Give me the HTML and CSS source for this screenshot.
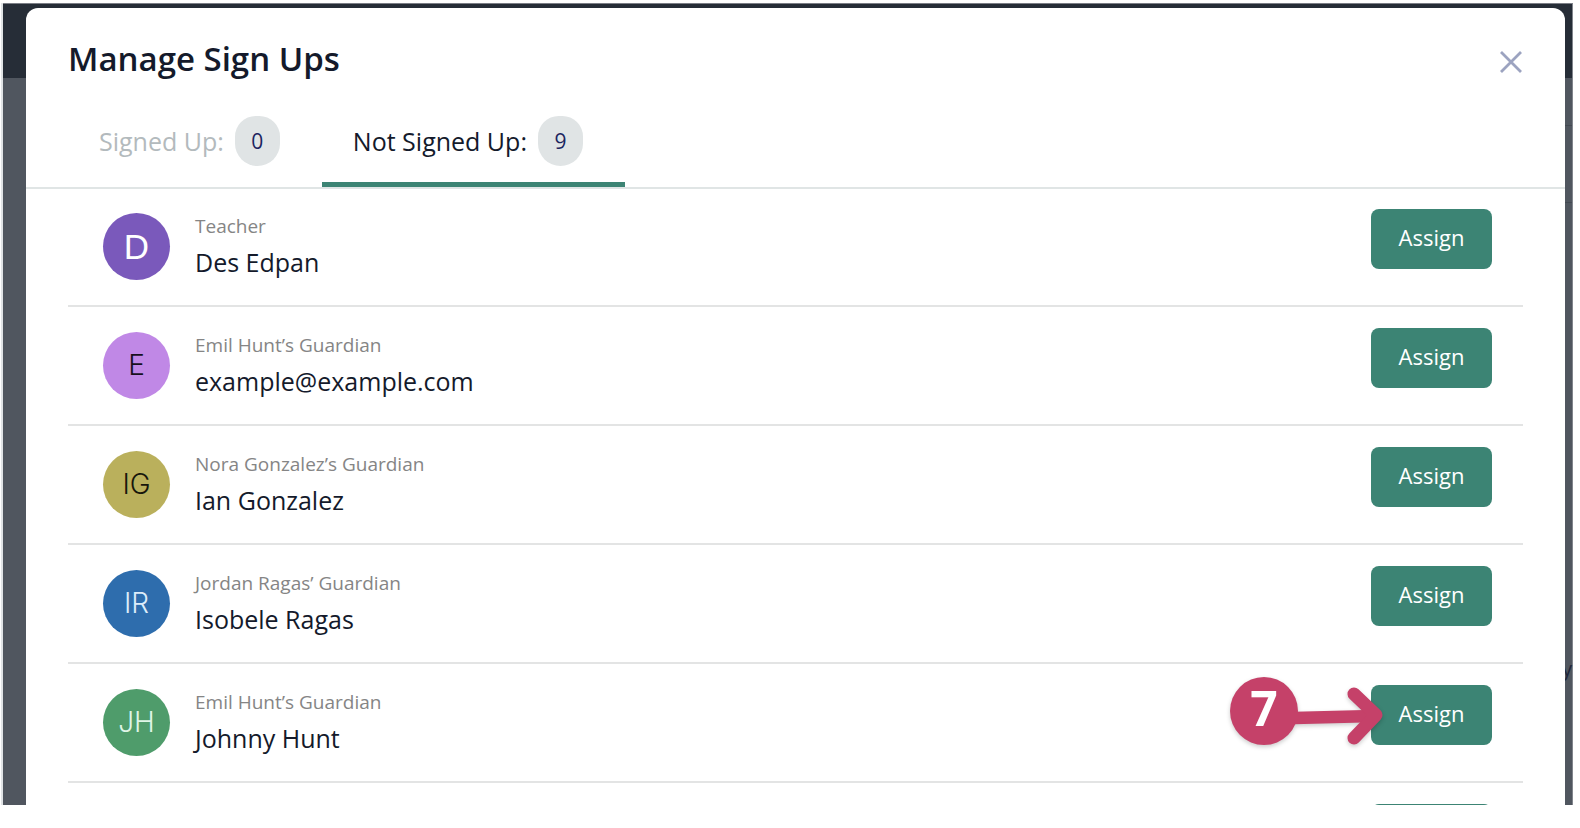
FILE: index.html
```
<!DOCTYPE html>
<html lang="en">
<head>
    <meta charset="UTF-8">
    <meta name="viewport" content="width=device-width, initial-scale=1.0">
    <title>Manage Sign Ups</title>
    <link rel="stylesheet" href="styles.css">
</head>
<body>

    <div class="screen">
        <!-- Page behind the modal -->
        <div class="backdrop" aria-hidden="true">
            <div class="backdrop-bar"></div>
            <div class="backdrop-line"></div>
            <div class="backdrop-panel">y</div>
        </div>

        <main class="modal">
            <header class="modal-header">
                <h1>Manage Sign Ups</h1>
                <button type="button" class="close" aria-label="Close">
                    <svg width="24" height="24" viewBox="0 0 24 24">
                        <path d="M2 2L22 22M22 2L2 22" fill="none" stroke="#9ca3c0" stroke-width="2.8"/>
                    </svg>
                </button>
            </header>

            <nav class="tabs">
                <button type="button" class="tab">Signed Up: <span class="count">0</span></button>
                <button type="button" class="tab active">Not Signed Up: <span class="count">9</span></button>
            </nav>

            <ul class="people">
                <li class="person">
                    <div class="avatar purple">D</div>
                    <div class="info">
                        <p class="role">Teacher</p>
                        <p class="name">Des Edpan</p>
                    </div>
                    <button type="button" class="assign">Assign</button>
                </li>
                <li class="person">
                    <div class="avatar lilac">E</div>
                    <div class="info">
                        <p class="role">Emil Hunt’s Guardian</p>
                        <p class="name">example@example.com</p>
                    </div>
                    <button type="button" class="assign">Assign</button>
                </li>
                <li class="person">
                    <div class="avatar olive">IG</div>
                    <div class="info">
                        <p class="role">Nora Gonzalez’s Guardian</p>
                        <p class="name">Ian Gonzalez</p>
                    </div>
                    <button type="button" class="assign">Assign</button>
                </li>
                <li class="person">
                    <div class="avatar blue">IR</div>
                    <div class="info">
                        <p class="role">Jordan Ragas’ Guardian</p>
                        <p class="name">Isobele Ragas</p>
                    </div>
                    <button type="button" class="assign">Assign</button>
                </li>
                <li class="person">
                    <div class="avatar green">JH</div>
                    <div class="info">
                        <p class="role">Emil Hunt’s Guardian</p>
                        <p class="name">Johnny Hunt</p>
                    </div>
                    <button type="button" class="assign">Assign</button>
                    <!-- Step marker pointing at the button -->
                    <div class="step">
                        <span class="step-number">7</span>
                        <svg class="step-arrow" width="92" height="64" viewBox="0 0 92 64">
                            <path d="M0 34L80 32" fill="none" stroke="#c54169" stroke-width="12.5"/>
                            <path d="M60 10L82 31L60 54" fill="none" stroke="#c54169" stroke-width="13" stroke-linecap="round" stroke-linejoin="round"/>
                        </svg>
                    </div>
                </li>
                <li class="person">
                    <button type="button" class="assign" aria-label="Assign"></button>
                </li>
            </ul>
        </main>
    </div>

</body>
</html>
```

FILE: styles.css
```
* {
    box-sizing: border-box;
}

body {
    font-family: 'Open Sans', 'Noto Sans', sans-serif;
    margin: 0;
    height: 100vh;
    padding: 3px 7px 23px 1px;
    background: white;
    color: #141a2b;
}

h1, p, ul {
    margin: 0;
    padding: 0;
}

button {
    font-family: inherit;
    border: none;
    padding: 0;
    background: none;
    cursor: pointer;
}

.screen {
    position: relative;
    height: 100%;
    overflow: hidden;
    border-left: 2px solid #e0e3e5;
    padding: 5px 8px 0 23px;
}

/* Dimmed page */
.backdrop {
    position: absolute;
    inset: 0;
    display: flex;
    flex-direction: column;
    background: #50565f;
    border-top: 1px solid #7b7e86;
    border-right: 1px solid #81858c;
}

.backdrop-bar {
    height: 74px;
    background: #262d37;
}

.backdrop-line {
    height: 48px;
    margin-left: 50%;
    border-bottom: 1px solid #434952;
}

.backdrop-panel {
    margin: 76px 0 0 50%;
    padding-top: 450px;
    border-top: 1px solid #434952;
    text-align: right;
    font-size: 20px;
    line-height: 32px;
    color: #20263a;
}

/* Modal */
.modal {
    position: relative;
    min-height: 100%;
    background: white;
    border-radius: 12px 12px 0 0;
}

.modal-header {
    display: flex;
    justify-content: space-between;
    align-items: center;
    height: 108px;
    padding: 0 42px;
}

h1 {
    padding-bottom: 6px;
    font-size: 33px;
    font-weight: 600;
    line-height: 48px;
}

.close {
    display: flex;
}

.tabs {
    display: flex;
    height: 73px;
    padding-left: 42px;
    border-bottom: 2px solid #e0e5e5;
}

.tab {
    display: flex;
    align-items: flex-start;
    gap: 11px;
    padding: 0 42px 0 31px;
    font-size: 25px;
    line-height: 50px;
    color: #b3babd;
    border-bottom: 5px solid transparent;
}

.tab.active {
    font-weight: 500;
    color: #141a2b;
    border-color: #3c8474;
}

.count {
    width: 45px;
    height: 50px;
    border-radius: 22px 22px 24px 24px;
    background: #e0e4e5;
    font-size: 21px;
    font-weight: 500;
    text-align: center;
    color: #1c2560;
}

/* List of people */
.people {
    list-style: none;
    margin: -1px 42px 0;
}

.person {
    position: relative;
    display: flex;
    align-items: flex-start;
    height: 119px;
    padding: 21px 31px 0 35px;
    border-bottom: 2px solid #e3e4e4;
}

.avatar {
    width: 67px;
    height: 67px;
    margin: 4px 25px 0 0;
    border-radius: 50%;
    font-family: Inter, 'Liberation Sans', sans-serif;
    font-size: 28px;
    font-weight: 300;
    line-height: 67px;
    text-align: center;
}

.purple {
    background: #7a59bb;
    color: white;
    font-family: 'Liberation Sans', sans-serif;
    font-size: 35px;
    font-weight: 400;
}

.lilac {
    background: #c088e6;
    color: #17101c;
}

.olive {
    background: #bab05c;
    color: #17160b;
}

.blue {
    background: #2e6dad;
    color: #dcecfa;
}

.green {
    background: #4f9c6b;
    color: #dff5e7;
}

.role {
    font-size: 19px;
    line-height: 34px;
    color: #858585;
}

.name {
    font-size: 25px;
    line-height: 38px;
}

.assign {
    width: 121px;
    height: 60px;
    margin-left: auto;
    padding-bottom: 5px;
    border-radius: 8px;
    background: #3c8474;
    color: white;
    font-size: 22px;
}

.step {
    position: absolute;
    top: 13px;
    right: 137px;
    display: flex;
    filter: drop-shadow(0 2px 2px rgba(0, 0, 0, 0.2));
}

.step-number {
    width: 68px;
    height: 68px;
    border-radius: 50%;
    background: #c54169;
    color: white;
    font-size: 48px;
    font-weight: 700;
    line-height: 62px;
    text-align: center;
}

.step-arrow {
    margin: 7px 0 0 -4px;
}
```
